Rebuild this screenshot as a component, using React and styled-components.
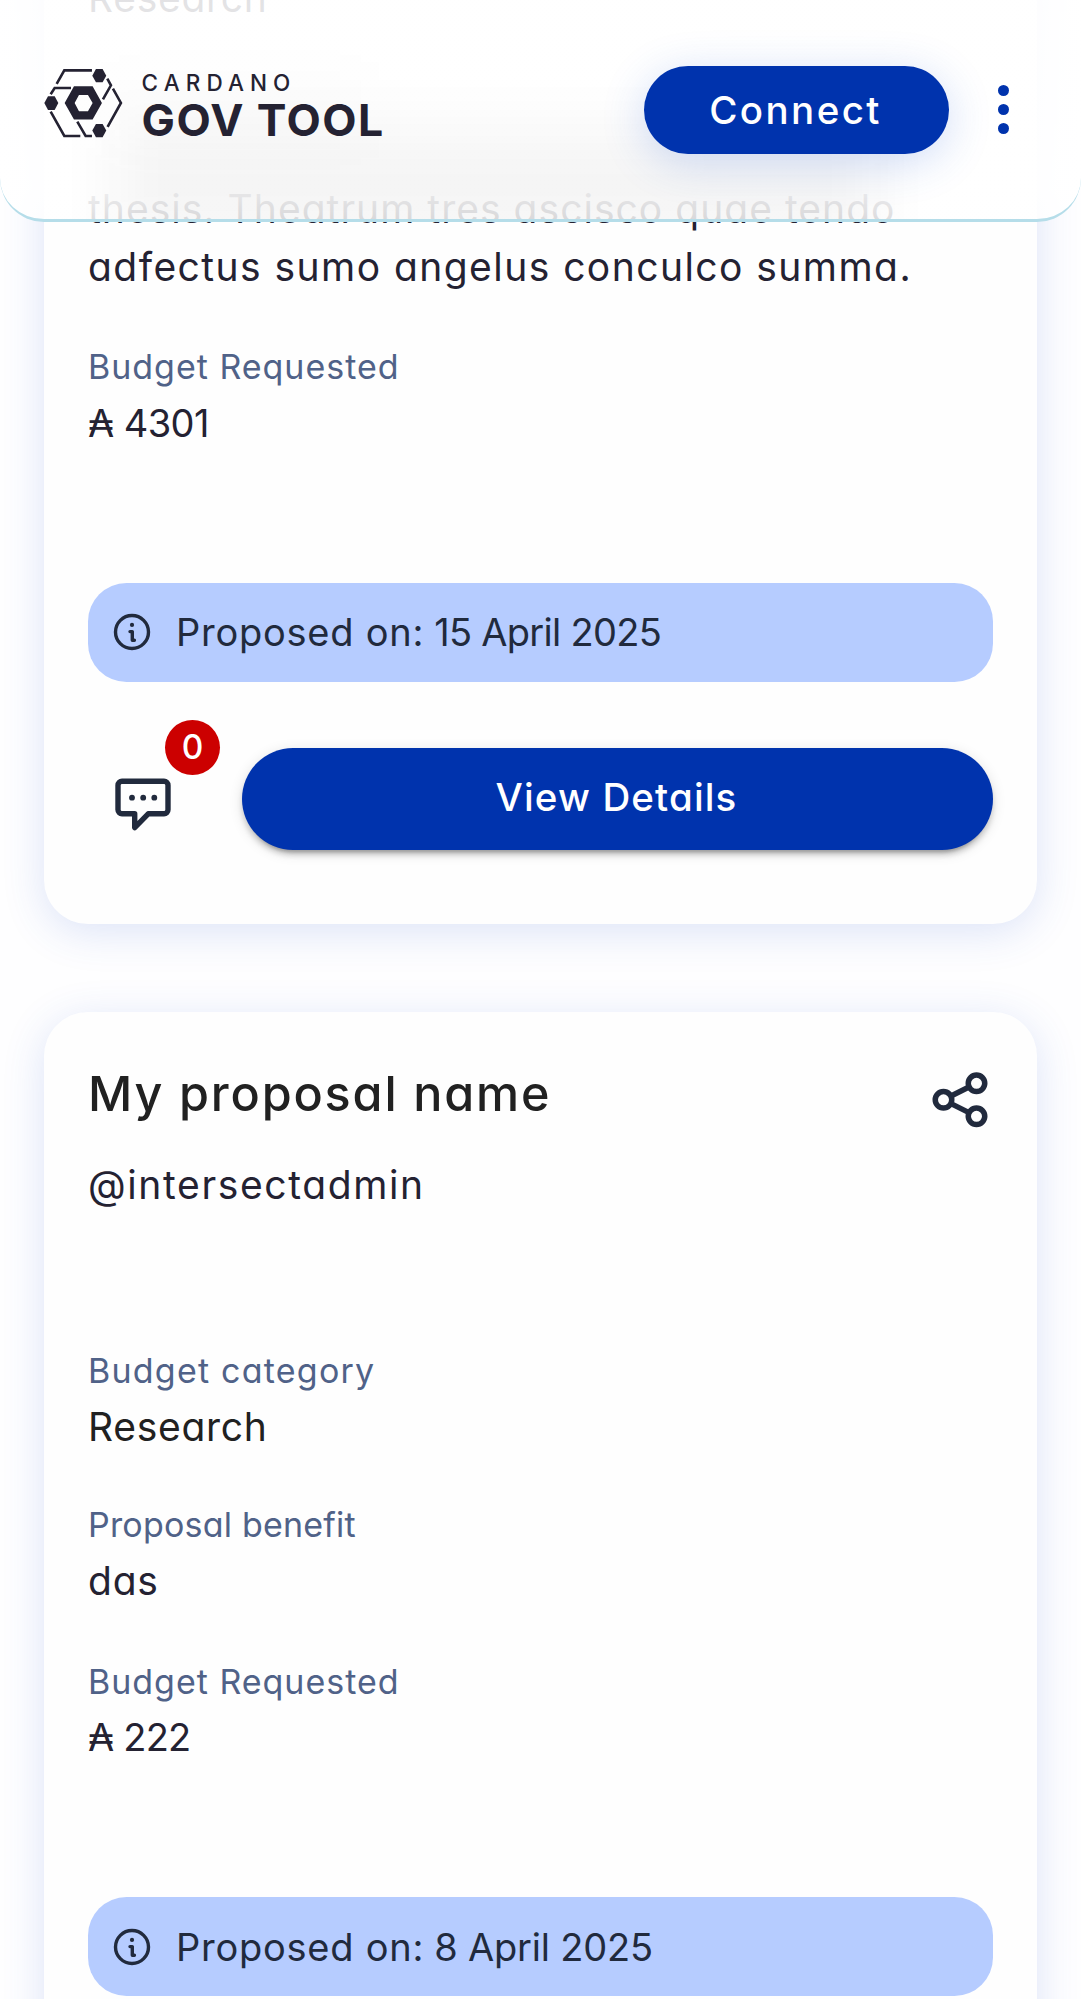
import React from "react";
import styled, { createGlobalStyle } from "styled-components";

const GlobalStyle = createGlobalStyle`
  * { box-sizing: border-box; }
  body {
    margin: 0;
    background: #fff;
    font-family: Inter, "Open Sans", "DejaVu Sans", sans-serif;
    font-feature-settings: "cv11", "ss03";
    color: #242232;
  }
`;

const Page = styled.div`
  position: relative;
  height: 1999px;
  overflow: hidden;
  background: #fefeff;
`;

const Header = styled.header`
  position: absolute;
  inset: 0 0 auto 0;
  z-index: 2;
  display: flex;
  align-items: center;
  height: 222px;
  padding: 0 60px 0 44px;
  overflow: hidden;
  border-bottom: 3px solid #b5dde9;
  border-radius: 0 0 44px 44px;
  background: linear-gradient(
    rgba(255, 255, 255, 0.87) 0,
    rgba(255, 255, 255, 0.94) 190px,
    rgba(255, 255, 255, 0.85) 222px
  );
`;

const Haze = styled.span`
  position: absolute;
  left: ${(p) => p.$left}px;
  top: ${(p) => p.$top}px;
  width: ${(p) => p.$width}px;
  height: ${(p) => p.$height}px;
  background: rgba(30, 30, 30, ${(p) => p.$alpha});
  filter: blur(27px);
`;

const Brand = styled.div`
  position: relative;
  display: flex;
  align-items: center;
  gap: 19px;
  margin-right: auto;
  margin-top: -12px;
`;

const BrandText = styled.div`
  display: flex;
  flex-direction: column;
  padding-top: 3px;
  white-space: nowrap;
`;

const BrandTop = styled.span`
  font-size: 22.5px;
  font-weight: 500;
  line-height: 24px;
  letter-spacing: 6.1px;
`;

const BrandName = styled.span`
  margin-top: 5px;
  font-size: 44.5px;
  font-weight: 650;
  line-height: 40px;
  letter-spacing: 1.4px;
`;

const ConnectButton = styled.button`
  position: relative;
  width: 305px;
  height: 88px;
  padding: 0 2px 0 0;
  border: 0;
  border-radius: 44px;
  background: #0033ad;
  box-shadow: 0 8px 44px rgba(47, 98, 220, 0.22);
  color: #fff;
  font: 500 38.5px/88px Inter, sans-serif;
  letter-spacing: 2.4px;
`;

const MenuButton = styled.button`
  position: relative;
  display: flex;
  flex-direction: column;
  align-items: center;
  gap: 8.4px;
  width: 35px;
  margin-left: 37px;
  padding: 0;
  border: 0;
  background: none;
`;

const MenuDot = styled.span`
  width: 11px;
  height: 11px;
  border-radius: 50%;
  background: #0033ad;
`;

const List = styled.main`
  display: flex;
  flex-direction: column;
  gap: 88px;
  margin-top: -75px;
  padding: 0 44px;
`;

const Card = styled.article`
  display: flex;
  flex-direction: column;
  flex: none;
  padding: 44px 44px 74px;
  border-radius: 44px;
  background: #fefefe;
  box-shadow: 0 8px 42px rgba(52, 92, 208, 0.17);
`;

const CardHead = styled.div`
  display: flex;
  justify-content: space-between;
  align-items: flex-start;
`;

const Title = styled.h2`
  margin: 5px 0 0;
  color: #212121;
  font-size: 48.5px;
  font-weight: 500;
  line-height: 66px;
  letter-spacing: 1.85px;
`;

const Field = styled.section`
  margin-top: ${(p) => p.$gap}px;
`;

const Label = styled.div`
  margin-bottom: 5.5px;
  color: #506288;
  font-size: 34px;
  line-height: 44px;
  letter-spacing: ${(p) => p.$track}px;
  white-space: nowrap;
`;

const Value = styled.div`
  margin-top: ${(p) => p.$gap || 0}px;
  color: ${(p) => p.$color || "#242232"};
  font-size: 39px;
  line-height: 57.75px;
  letter-spacing: ${(p) => p.$track || 0}px;
  white-space: nowrap;
`;

const Amount = styled(Value)`
  font-size: 38px;
`;

const DateBar = styled.div`
  display: flex;
  align-items: center;
  height: 99px;
  margin-top: ${(p) => p.$gap}px;
  padding: 0 25px;
  border-radius: 38.5px;
  background: #b6ccff;
  color: #212a3d;
  font-size: 38px;
  white-space: nowrap;
`;

const DateLabel = styled.span`
  margin: 0 10px 0 25px;
  letter-spacing: 0.75px;
`;

const DateText = styled.span`
  letter-spacing: ${(p) => p.$track}px;
`;

const Actions = styled.div`
  display: flex;
  margin-top: 66px;
`;

const CommentButton = styled.div`
  position: relative;
  width: 154px;
  padding: 28px 0 0 24.5px;
`;

const Badge = styled.span`
  position: absolute;
  left: 77px;
  top: -27.5px;
  width: 55px;
  height: 55px;
  border-radius: 50%;
  background: #cc0000;
  color: #fff;
  font-size: 33.5px;
  font-weight: 500;
  line-height: 55px;
  text-align: center;
`;

const DetailsButton = styled.button`
  flex: 1;
  height: 102.3px;
  padding: 0 2px 4px 0;
  border: 0;
  border-radius: 51px;
  background: #0033ad;
  box-shadow: 0 8px 3px -5.5px rgba(0, 0, 0, 0.2),
    0 5.5px 5.5px rgba(0, 0, 0, 0.14), 0 3px 14px rgba(0, 0, 0, 0.12);
  color: #fff;
  font: 500 38.5px/98px Inter, sans-serif;
  font-feature-settings: "cv11";
  letter-spacing: 1.15px;
`;

const ShareSlot = styled.div`
  margin: 12.5px 0 0;
  padding: 4px 5.2px 0 0;
  line-height: 0;
`;

function Logo() {
  return (
    <svg width="78.6" height="68.6" viewBox="42 56 236 206">
      <path
        fill="#242232"
        fillRule="evenodd"
        d="M104 158 132 108h56l28 50-28 50h-56zM134 158l13 25h27l14-25-14-24h-27z"
      />
      <g fill="#242232">
        <path d="m43 158 11-20h20l11 20-11 21H54z" />
        <path d="m187 76 11-20h20l11 20-11 20h-20z" />
        <path d="m187 241 11-20h20l11 20-11 20h-20z" />
      </g>
      <g fill="none" stroke="#242232" strokeWidth="7.8">
        <path d="M80 101 103 60h83" />
        <path d="m62 132 12-19h49" />
        <path d="m62 184 41 73h48" />
        <path d="m142 214 25 43h19" />
        <path d="m232 85 11 20-24 42" />
        <path d="m249 115 24 43-40 72" />
      </g>
    </svg>
  );
}

function InfoIcon() {
  return (
    <svg width="38" height="38" viewBox="0 0 38 38" fill="none" stroke="#212a3d" strokeLinecap="round" strokeLinejoin="round">
      <circle cx="19" cy="19" r="16.5" strokeWidth="3.4" />
      <circle cx="19" cy="11.9" r="2.1" fill="#212a3d" stroke="none" />
      <path d="M17 18.6h2.3v8.6h2.1" strokeWidth="3.4" />
    </svg>
  );
}

function CommentIcon() {
  return (
    <svg width="60" height="56" viewBox="0 0 60 56" fill="none" stroke="#212a3d" strokeWidth="5.4" strokeLinejoin="round">
      <path d="M9 5.2h42a4 4 0 0 1 4 4v24.6a4 4 0 0 1-4 4H35.2L21.7 51.6V37.8H9a4 4 0 0 1-4-4V9.2a4 4 0 0 1 4-4Z" />
      <g fill="#212a3d" stroke="none">
        <circle cx="19" cy="21.7" r="2.9" />
        <circle cx="30.2" cy="21.7" r="2.9" />
        <circle cx="41.3" cy="21.7" r="2.9" />
      </g>
    </svg>
  );
}

function ShareIcon() {
  return (
    <svg width="56" height="56" viewBox="0 0 56 56" fill="none" stroke="#212a3d" strokeWidth="5.5">
      <circle cx="44.5" cy="11.3" r="8.25" />
      <circle cx="11.5" cy="27.8" r="8.25" />
      <circle cx="44.5" cy="44.3" r="8.25" />
      <path d="m19 24 18-9M19 31.6l18 9" />
    </svg>
  );
}

export default function App() {
  return (
    <>
      <GlobalStyle />
      <Page>
        <Header>
          <Haze $left={115} $top={130} $width={760} $height={110} $alpha={0.044} />
          <Haze $left={110} $top={80} $width={260} $height={60} $alpha={0.016} />
          <Brand>
            <Logo />
            <BrandText>
              <BrandTop>CARDANO</BrandTop>
              <BrandName>GOV TOOL</BrandName>
            </BrandText>
          </Brand>
          <ConnectButton>Connect</ConnectButton>
          <MenuButton aria-label="Menu">
            <MenuDot />
            <MenuDot />
            <MenuDot />
          </MenuButton>
        </Header>

        <List>
          <Card>
            <Value $track={0.7}>Research</Value>
            <Value $gap={153} $track={1.03}>thesis. Theatrum tres ascisco quae tendo</Value>
            <Value $track={1.45}>adfectus sumo angelus conculco summa.</Value>
            <Field $gap={50}>
              <Label $track={0.98}>Budget Requested</Label>
              <Amount $track={-0.6}>₳ 4301</Amount>
            </Field>
            <DateBar $gap={130.2}>
              <InfoIcon />
              <DateLabel>Proposed on:</DateLabel>
              <DateText $track={-0.7}>15 April 2025</DateText>
            </DateBar>
            <Actions>
              <CommentButton>
                <CommentIcon />
                <Badge>0</Badge>
              </CommentButton>
              <DetailsButton>View Details</DetailsButton>
            </Actions>
          </Card>

          <Card>
            <CardHead>
              <Title>My proposal name</Title>
              <ShareSlot>
                <ShareIcon />
              </ShareSlot>
            </CardHead>
            <Value $gap={28} $track={1.63}>@intersectadmin</Value>
            <Field $gap={134.7}>
              <Label $track={1.22}>Budget category</Label>
              <Value $color="#212121" $track={0.7}>Research</Value>
            </Field>
            <Field $gap={46.8}>
              <Label $track={0.2}>Proposal benefit</Label>
              <Value $track={0.75}>das</Value>
            </Field>
            <Field $gap={49.7}>
              <Label $track={0.98}>Budget Requested</Label>
              <Amount $track={-0.8}>₳ 222</Amount>
            </Field>
            <DateBar $gap={130.1}>
              <InfoIcon />
              <DateLabel>Proposed on:</DateLabel>
              <DateText $track={-0.2}>8 April 2025</DateText>
            </DateBar>
          </Card>
        </List>
      </Page>
    </>
  );
}
